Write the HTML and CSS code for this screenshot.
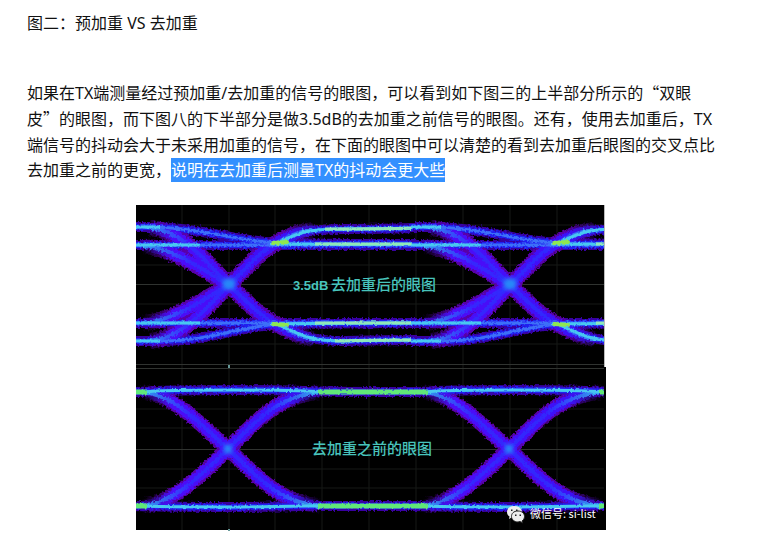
FILE: index.html
```html
<!DOCTYPE html>
<html lang="zh-CN">
<head>
<meta charset="utf-8">
<meta name="viewport" content="width=device-width, initial-scale=1">
<title>预加重 VS 去加重</title>
<link rel="stylesheet" href="styles.css">
</head>
<body>
<article class="article">
  <p class="caption">图二：预加重 VS 去加重</p>
  <p class="text">如果在TX端测量经过预加重/去加重的信号的眼图，可以看到如下图三的上半部分所示的<span class="quote">“</span>双眼皮<span class="quote">”</span>的眼图，而下图八的下半部分是做3.5dB的去加重之前信号的眼图。还有，使用去加重后，TX端信号的抖动会大于未采用加重的信号，在下面的眼图中可以清楚的看到去加重后眼图的交叉点比去加重之前的更宽，<mark class="selected">说明在去加重后测量TX的抖动会更大些</mark></p>
  <figure class="figure">
    <svg class="eye" viewBox="136 205 470 326" role="img" aria-label="去加重前后的眼图">
      <defs>
        <filter id="grain" filterUnits="userSpaceOnUse" x="130" y="200" width="480" height="336" color-interpolation-filters="sRGB">
          <feTurbulence type="fractalNoise" baseFrequency="0.5" numOctaves="2" seed="4" result="n"/>
          <feDisplacementMap in="SourceGraphic" in2="n" scale="5" xChannelSelector="R" yChannelSelector="G" result="d"/>
          <feGaussianBlur in="d" stdDeviation="0.7"/>
        </filter>
        <filter id="fine" filterUnits="userSpaceOnUse" x="130" y="200" width="480" height="336" color-interpolation-filters="sRGB">
          <feTurbulence type="fractalNoise" baseFrequency="0.4" numOctaves="1" seed="9" result="n"/>
          <feDisplacementMap in="SourceGraphic" in2="n" scale="3" xChannelSelector="R" yChannelSelector="G" result="d"/>
          <feGaussianBlur in="d" stdDeviation="0.7"/>
        </filter>
        <filter id="soft" x="-50%" y="-50%" width="200%" height="200%"><feGaussianBlur stdDeviation="2"/></filter>
        <clipPath id="screen"><path d="M136 205H604V531H136Z"/></clipPath>
        <linearGradient id="violet" gradientUnits="userSpaceOnUse" x1="136" x2="322" y1="0" y2="0">
          <stop offset="0.03" stop-color="#3818f8" stop-opacity="0"/>
          <stop offset="0.2" stop-color="#4c0cf8"/>
          <stop offset="0.82" stop-color="#3c10f8"/>
          <stop offset="1" stop-color="#3020f0" stop-opacity="0"/>
        </linearGradient>
        <linearGradient id="haze" gradientUnits="userSpaceOnUse" x1="136" x2="322" y1="0" y2="0">
          <stop offset="0.03" stop-color="#5800a8" stop-opacity="0"/>
          <stop offset="0.2" stop-color="#5800a8"/>
          <stop offset="0.8" stop-color="#5800a8"/>
          <stop offset="1" stop-color="#4800a8" stop-opacity="0"/>
        </linearGradient>
        <linearGradient id="shine" gradientUnits="userSpaceOnUse" x1="136" x2="322" y1="0" y2="0">
          <stop offset="0" stop-color="#38b8f0"/>
          <stop offset="0.3" stop-color="#2838ff" stop-opacity="0.6"/>
          <stop offset="0.7" stop-color="#2838ff" stop-opacity="0.6"/>
          <stop offset="1" stop-color="#38b8f0"/>
        </linearGradient>

        <g id="rails-a">
          <path d="M130 227H155C200 228 232 240 277 243C315 244 355 244 417 244"/>
          <path d="M130 245H417"/>
          <path d="M130 323H417"/>
          <path d="M130 341H165C205 341 235 328 277 324C315 324 350 323 417 323"/>
          <path d="M277 243C302 231 310 229 345 229Q382 229 417 228"/>
          <path d="M277 324C305 338 315 341 345 341Q382 340 417 340"/>
        </g>
        <g id="cross-a">
          <path d="M150 228C185 231 207 264 229 285S264 320 280 326Q298 336 313 339"/>
          <path d="M143 246C175 248 209 274 229 285"/>
          <path d="M150 341C185 338 207 306 229 285S260 250 280 241Q298 231 313 230"/>
          <path d="M143 323C175 321 209 296 229 285"/>
        </g>
        <g id="rails-b">
          <path d="M130 392Q145 392 155 391C200 390 270 390 305 391Q325 392 417 392"/>
          <path d="M130 506Q220 508 305 506Q325 506 417 506"/>
        </g>
        <g id="cross-b">
          <path d="M142 392C174 394 201 425 228 449S276 503 322 506"/>
          <path d="M142 506C174 503 201 475 228 449S276 395 322 392"/>
        </g>
        <g id="cell">
          <g class="trace" filter="url(#grain)">
            <use href="#rails-a" class="rail-glow"/>
            <use href="#rails-b" class="rail-glow"/>
            <use href="#cross-a" class="cross-haze-wide"/>
            <use href="#cross-b" class="cross-haze"/>
            <use href="#rails-a" class="rail-blue"/>
            <use href="#rails-b" class="rail-blue"/>
            <use href="#cross-a" class="cross-violet"/>
            <use href="#cross-b" class="cross-violet"/>
            <use href="#cross-a" class="cross-shine"/>
            <use href="#cross-b" class="cross-shine"/>
            <use href="#rails-a" class="rail-sky"/>
          </g>
          <g class="trace" filter="url(#fine)">
            <use href="#rails-b" class="rail-cyan"/>
            <g class="rail-cyan">
              <path d="M130 227H160M130 245H200M130 323H200M130 341H160"/>
              <path d="M270 244C320 244 370 245 417 244M270 324Q350 323 417 323"/>
              <path d="M277 243C302 231 310 229 345 229Q382 229 417 228"/>
              <path d="M277 324C305 338 315 341 345 341Q382 340 417 340"/>
            </g>
            <g class="rail-lime">
              <path d="M325 229Q382 229 417 228M315 244H417M315 323H417M335 341Q380 340 417 340"/>
              <path d="M417 228H433M417 244H433M417 323H433M417 340H433"/>
            </g>
            <path class="rail-green" d="M130 392H147M130 506H147M318 392H430M318 506H430"/>
            <path class="hot" d="M273 243L287 242M273 324L287 325"/>
          </g>
          <ellipse class="knot" cx="229" cy="284" rx="7" ry="6"/>
          <ellipse class="knot" cx="228" cy="449" rx="4" ry="5"/>
        </g>
      </defs>

      <path class="edge" d="M604 205H605V367H604Z"/>
      <path class="backdrop" d="M136 205H604V367H606V530H136Z"/>
      <path class="grid" d="M182 205V530M229 205V530M275 205V530M322 205V530M369 205V530M416 205V530M463 205V530M510 205V530M557 205V530M136 225H604M136 265H604M136 304H604M136 344H604M136 409H604M136 428H604M136 469H604M136 488H604"/>
      <path class="axis" d="M136 284.500H604M136 449.500H604M136 364.500H604M136 368.500H604"/>
      <path class="tick" d="M228 365H230V368H228ZM228 529H230V531H228Z"/>
      <g clip-path="url(#screen)">
        <use href="#cell"/>
        <use href="#cell" x="281"/>
      </g>
      <text class="label label-latin" x="293" y="290">3.5dB</text>
      <text class="label" x="331" y="290">去加重后的眼图</text>
      <text class="label" x="312" y="454">去加重之前的眼图</text>

      <g class="wechat">
        <path d="M514 506C509.500 506 507 509 507 512C507 514 508 515.500 509.500 516.500L509 519L511.500 517.500Q513 518 515 518C519 518 522 515.500 522 512S518.500 506 514 506Z"/>
        <path class="front" d="M518 511C513.500 511 511.500 513.500 511.500 516.500S514.500 522 518 522L520 521.500L522.500 523L522 521C523.500 520 524.500 518.500 524.500 516.500C524.500 513.500 522 511 518 511Z"/>
        <path class="eyes" d="M511 509.500h1.500v1.500h-1.500ZM516 509.500h1.500v1.500h-1.500ZM515 514.500h1.500v1.500h-1.500ZM519.500 514.500h1.500v1.500h-1.500Z"/>
      </g>
      <text class="watermark" x="530" y="518">微信号: si-list</text>
    </svg>
  </figure>
</article>
</body>
</html>
```
FILE: styles.css
```css
body {
  margin: 0;
  background: #fff;
  color: #111;
  font: 16px/1.6 "Noto Sans", "Noto Sans CJK SC", sans-serif;
}

.article {
  padding: 11px 49px 12px 27px;
}

.caption {
  margin: 0 0 43px;
}

.text {
  margin: 0 0 21px;
}

.quote {
  font-family: "Noto Sans CJK SC", sans-serif;
}

.selected {
  padding: 1px 0;
  background: #3390ff;
  color: #fff;
}

.figure {
  max-width: 470px;
  margin: 0 auto;
}

.eye {
  display: block;
  width: 100%;
}

.backdrop { fill: #000; }
.edge { fill: #bbb; }
.grid { fill: none; stroke: #161916; }
.axis { fill: none; stroke: #303330; }
.tick { fill: #699; }

.trace { fill: none; }
.rail-glow { stroke: #3800a0; stroke-width: 10px; }
.cross-haze { stroke: url(#haze); stroke-width: 15px; }
.cross-haze-wide { stroke: url(#haze); stroke-width: 16px; }
.rail-blue { stroke: #2020f0; stroke-width: 6px; }
.cross-violet { stroke: url(#violet); stroke-width: 11px; }
.cross-shine { stroke: url(#shine); stroke-width: 4px; }
.rail-sky { stroke: #3c70f8; stroke-width: 3px; }
.rail-cyan { stroke: #48c8f0; stroke-width: 3px; }
.rail-lime { stroke: #90e8b8; stroke-width: 3px; }
.rail-green { stroke: #60e878; stroke-width: 5px; }
.hot { stroke: #90e850; stroke-width: 4px; stroke-linecap: round; }
.knot { fill: #2888f8; filter: url(#soft); }

.label {
  fill: #48c4bc;
  font: 500 15px "Noto Sans CJK SC", sans-serif;
}

.label-latin {
  font: bold 13px "Liberation Sans", sans-serif;
}

.wechat { fill: #eee; }
.wechat .front { stroke: #222; stroke-width: 1px; }
.wechat .eyes { fill: #222; }

.watermark {
  fill: #fff;
  font: 11px "Noto Sans CJK SC", sans-serif;
}
```
